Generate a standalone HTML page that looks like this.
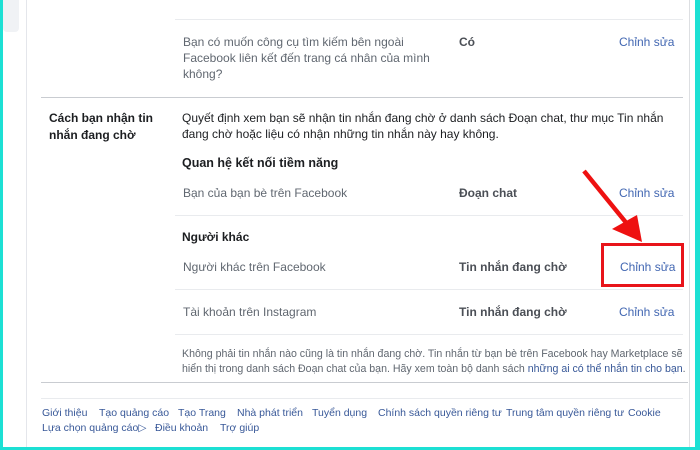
<!DOCTYPE html>
<html><head><meta charset="utf-8"><style>
*{margin:0;padding:0;box-sizing:border-box}
body{width:700px;height:450px;overflow:hidden;background:#1de0d4;font-family:"Liberation Sans",sans-serif;position:relative}
.pg{position:absolute;left:3px;top:0;width:692px;height:447px;background:#fff}
.gs{position:absolute;left:3px;top:0;width:16px;height:32px;background:#f0f2f5;border-radius:0 0 4px 4px}
.vl{position:absolute;left:26px;top:0;width:1px;height:447px;background:#e4e6eb}
.rl{position:absolute;left:689px;top:0;width:1px;height:447px;background:#dddfe2}
.t{position:absolute;font-size:12px;line-height:16px;color:#1c1e21;white-space:nowrap}
.g{color:#606770}
.b{font-weight:bold}
.a{color:#4267b2}
.h{position:absolute;height:1px;background:#e9ebee}
.hd{position:absolute;height:1px;background:#c9ccd1}
.s{font-size:10.6px;line-height:15px;color:#606770}
.f{font-size:10.5px;color:#385898}
</style></head><body>
<div class="pg"></div>
<div class="gs"></div>
<div class="vl"></div>
<div class="rl"></div>
<div class="h" style="left:175px;top:19px;width:508px"></div>
<div class="t g" style="left:183px;top:34px">Bạn có muốn công cụ tìm kiếm bên ngoài<br>Facebook liên kết đến trang cá nhân của mình<br>không?</div>
<div class="t b" style="left:459px;top:34px;color:#4b4f56">Có</div>
<div class="t a" style="left:619px;top:34px">Chỉnh sửa</div>
<div class="hd" style="left:41px;top:97px;width:642px"></div>
<div class="t b" style="left:49px;top:110px;line-height:17px">Cách bạn nhận tin<br>nhắn đang chờ</div>
<div class="t" style="left:182px;top:110px">Quyết định xem bạn sẽ nhận tin nhắn đang chờ ở danh sách Đoạn chat, thư mục Tin nhắn<br>đang chờ hoặc liệu có nhận những tin nhắn này hay không.</div>
<div class="t b" style="left:182px;top:155px;font-size:12.5px">Quan hệ kết nối tiềm năng</div>
<div class="t g" style="left:183px;top:185px">Bạn của bạn bè trên Facebook</div>
<div class="t b" style="left:459px;top:185px;color:#4b4f56">Đoạn chat</div>
<div class="t a" style="left:619px;top:185px">Chỉnh sửa</div>
<div class="h" style="left:175px;top:215px;width:508px"></div>
<div class="t b" style="left:182px;top:229px">Người khác</div>
<div class="t g" style="left:183px;top:259px">Người khác trên Facebook</div>
<div class="t b" style="left:459px;top:259px;color:#4b4f56">Tin nhắn đang chờ</div>
<div class="t a" style="left:620px;top:259px">Chỉnh sửa</div>
<div style="position:absolute;left:601px;top:243px;width:83px;height:44px;border:3px solid #e8141a"></div>
<div class="h" style="left:175px;top:289px;width:508px"></div>
<div class="t g" style="left:183px;top:304px">Tài khoản trên Instagram</div>
<div class="t b" style="left:459px;top:304px;color:#4b4f56">Tin nhắn đang chờ</div>
<div class="t a" style="left:619px;top:304px">Chỉnh sửa</div>
<div class="h" style="left:175px;top:334px;width:508px"></div>
<div class="t s" style="left:182px;top:347px">Không phải tin nhắn nào cũng là tin nhắn đang chờ. Tin nhắn từ bạn bè trên Facebook hay Marketplace sẽ<br>hiển thị trong danh sách Đoạn chat của bạn. Hãy xem toàn bộ danh sách <span style="color:#385898">những ai có thể nhắn tin cho bạn</span>.</div>
<div class="hd" style="left:41px;top:382px;width:647px"></div>
<div class="h" style="left:41px;top:398px;width:642px"></div>
<div class="t f" style="left:42px;top:405px">Giới thiệu</div>
<div class="t f" style="left:99px;top:405px">Tạo quảng cáo</div>
<div class="t f" style="left:178px;top:405px">Tạo Trang</div>
<div class="t f" style="left:237px;top:405px">Nhà phát triển</div>
<div class="t f" style="left:312px;top:405px">Tuyển dụng</div>
<div class="t f" style="left:378px;top:405px">Chính sách quyền riêng tư</div>
<div class="t f" style="left:506px;top:405px">Trung tâm quyền riêng tư</div>
<div class="t f" style="left:628px;top:405px">Cookie</div>
<div class="t f" style="left:42px;top:420px">Lựa chọn quảng cáo▷</div>
<div class="t f" style="left:155px;top:420px">Điều khoản</div>
<div class="t f" style="left:220px;top:420px">Trợ giúp</div>
<svg style="position:absolute;left:0;top:0" width="700" height="450">
<line x1="584" y1="171" x2="628" y2="225" stroke="#ee1111" stroke-width="4.5"/>
<polygon points="642,242 612,229 637,215" fill="#ee1111"/>
</svg>
</body></html>
